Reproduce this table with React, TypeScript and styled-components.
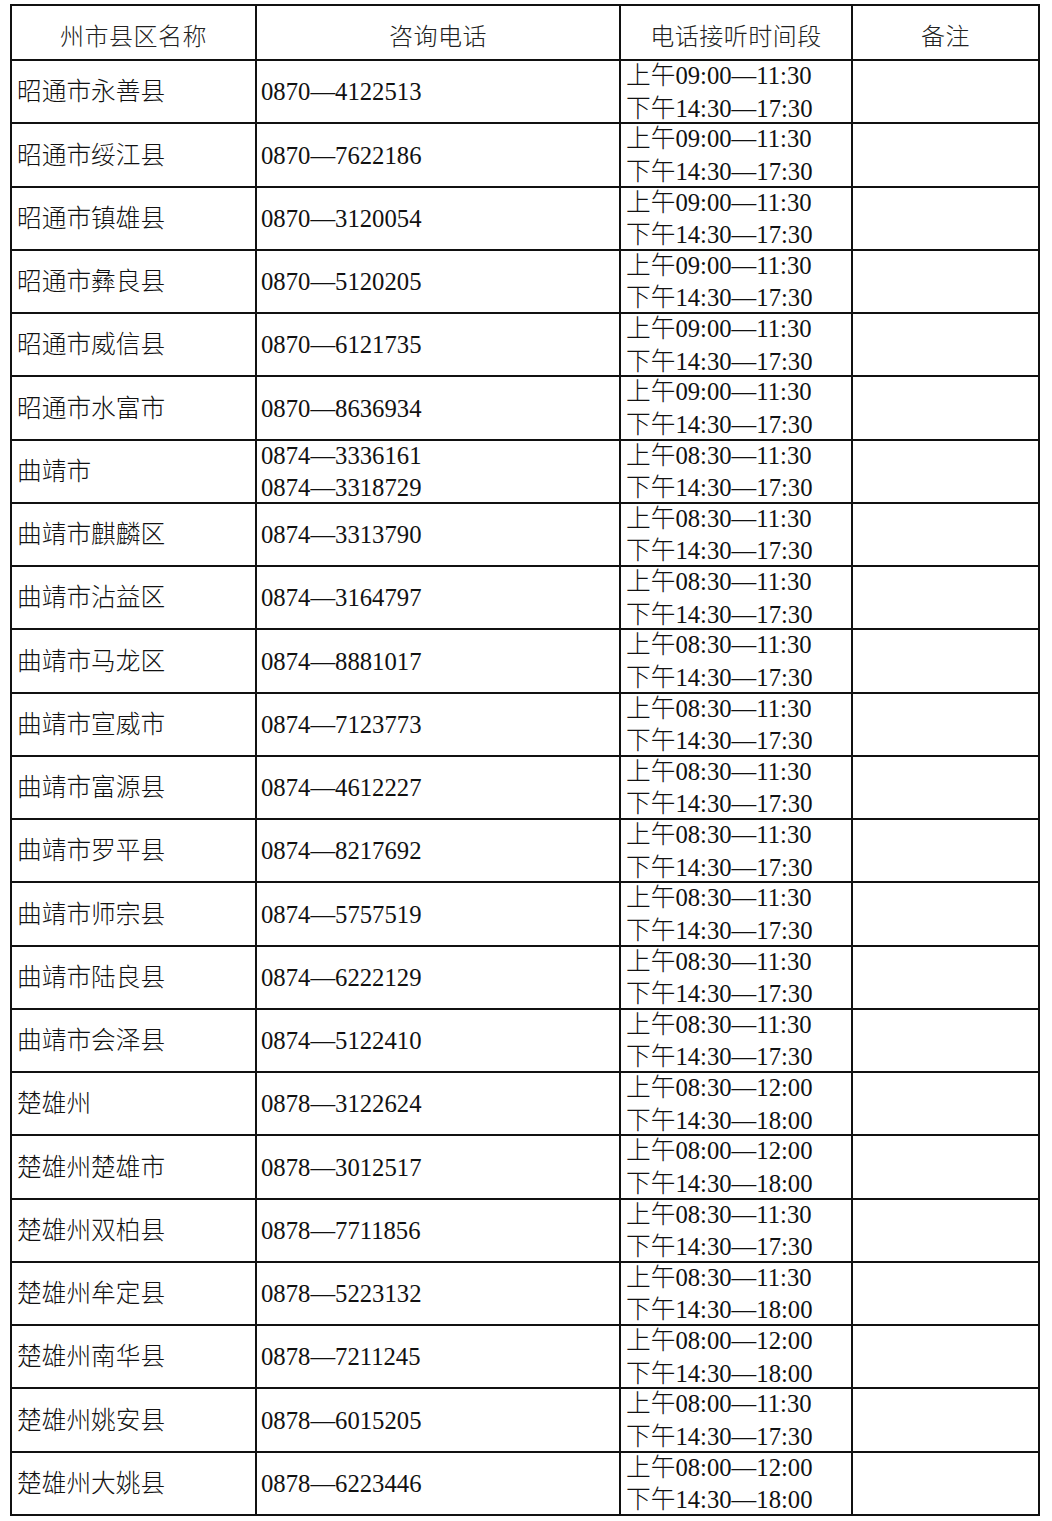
import React from "react";
import styled, { createGlobalStyle } from "styled-components";

const Global = createGlobalStyle`
  html, body { margin: 0; padding: 0; background: #fff; }
  body { font-family: "Liberation Serif", "Noto Sans CJK SC", serif; color: #111; }
`;

const Page = styled.div`
  padding: 4px 0 0 10px;
`;

const Grid = styled.div`
  display: grid;
  width: 1030px;
  grid-template-columns: 243px 362px 230px 185px;
  grid-template-rows: 53px repeat(23, 61.26px);
  gap: 2px;
  padding: 2px;
  box-sizing: border-box;
  background: #111;
`;

const HeadCell = styled.div`
  background: #fff;
  display: flex;
  align-items: center;
  justify-content: center;
  padding-top: 4px;
  box-sizing: border-box;
  font-family: "Liberation Serif", "Noto Sans CJK SC", serif;
  font-size: 24px;
  font-weight: 300;
  color: #222;
  letter-spacing: 0.5px;
`;

const Cell = styled.div<{ $pad?: number }>`
  background: #fff;
  display: flex;
  flex-direction: column;
  justify-content: center;
  padding-left: ${(p) => p.$pad ?? 5}px;
  padding-top: 2px;
  box-sizing: border-box;
  font-size: 24.7px;
  font-weight: 300;
  line-height: 32.5px;
  white-space: nowrap;
  overflow: visible;
  min-height: 0;
`;

const Line = styled.span`
  display: block;
`;

type Row = { name: string; phones: string[]; am: string; pm: string };

const rows: Row[] = [
  { name: "昭通市永善县", phones: ["0870—4122513"], am: "09:00—11:30", pm: "14:30—17:30" },
  { name: "昭通市绥江县", phones: ["0870—7622186"], am: "09:00—11:30", pm: "14:30—17:30" },
  { name: "昭通市镇雄县", phones: ["0870—3120054"], am: "09:00—11:30", pm: "14:30—17:30" },
  { name: "昭通市彝良县", phones: ["0870—5120205"], am: "09:00—11:30", pm: "14:30—17:30" },
  { name: "昭通市威信县", phones: ["0870—6121735"], am: "09:00—11:30", pm: "14:30—17:30" },
  { name: "昭通市水富市", phones: ["0870—8636934"], am: "09:00—11:30", pm: "14:30—17:30" },
  { name: "曲靖市", phones: ["0874—3336161", "0874—3318729"], am: "08:30—11:30", pm: "14:30—17:30" },
  { name: "曲靖市麒麟区", phones: ["0874—3313790"], am: "08:30—11:30", pm: "14:30—17:30" },
  { name: "曲靖市沾益区", phones: ["0874—3164797"], am: "08:30—11:30", pm: "14:30—17:30" },
  { name: "曲靖市马龙区", phones: ["0874—8881017"], am: "08:30—11:30", pm: "14:30—17:30" },
  { name: "曲靖市宣威市", phones: ["0874—7123773"], am: "08:30—11:30", pm: "14:30—17:30" },
  { name: "曲靖市富源县", phones: ["0874—4612227"], am: "08:30—11:30", pm: "14:30—17:30" },
  { name: "曲靖市罗平县", phones: ["0874—8217692"], am: "08:30—11:30", pm: "14:30—17:30" },
  { name: "曲靖市师宗县", phones: ["0874—5757519"], am: "08:30—11:30", pm: "14:30—17:30" },
  { name: "曲靖市陆良县", phones: ["0874—6222129"], am: "08:30—11:30", pm: "14:30—17:30" },
  { name: "曲靖市会泽县", phones: ["0874—5122410"], am: "08:30—11:30", pm: "14:30—17:30" },
  { name: "楚雄州", phones: ["0878—3122624"], am: "08:30—12:00", pm: "14:30—18:00" },
  { name: "楚雄州楚雄市", phones: ["0878—3012517"], am: "08:00—12:00", pm: "14:30—18:00" },
  { name: "楚雄州双柏县", phones: ["0878—7711856"], am: "08:30—11:30", pm: "14:30—17:30" },
  { name: "楚雄州牟定县", phones: ["0878—5223132"], am: "08:30—11:30", pm: "14:30—18:00" },
  { name: "楚雄州南华县", phones: ["0878—7211245"], am: "08:00—12:00", pm: "14:30—18:00" },
  { name: "楚雄州姚安县", phones: ["0878—6015205"], am: "08:00—11:30", pm: "14:30—17:30" },
  { name: "楚雄州大姚县", phones: ["0878—6223446"], am: "08:00—12:00", pm: "14:30—18:00" },
];

export default function App() {
  return (
    <Page>
      <Global />
      <Grid>
        <HeadCell>州市县区名称</HeadCell>
        <HeadCell>咨询电话</HeadCell>
        <HeadCell>电话接听时间段</HeadCell>
        <HeadCell>备注</HeadCell>
        {rows.map((r) => (
          <React.Fragment key={r.name}>
            <Cell $pad={5}>{r.name}</Cell>
            <Cell $pad={4}>
              {r.phones.map((p) => (
                <Line key={p}>{p}</Line>
              ))}
            </Cell>
            <Cell $pad={5}>
              <Line>上午{r.am}</Line>
              <Line>下午{r.pm}</Line>
            </Cell>
            <Cell />
          </React.Fragment>
        ))}
      </Grid>
    </Page>
  );
}
